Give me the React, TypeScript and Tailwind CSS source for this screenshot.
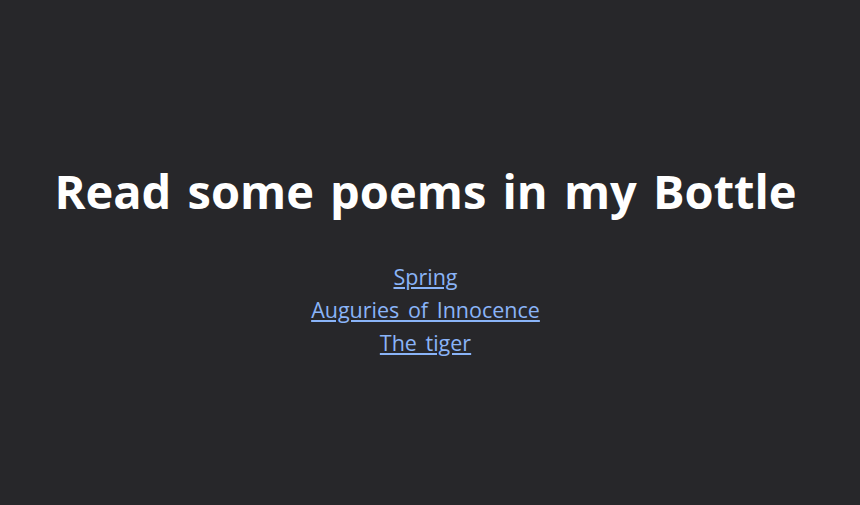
import React from "react";

const poems = ["Spring", "Auguries of Innocence", "The tiger"];

export default function App() {
  return (
    <div className="flex h-screen w-full flex-col items-center justify-center bg-[#27272a] pr-[9px] pt-[16px] font-['Open_Sans',sans-serif] text-white">
      <h1 className="text-[47px] font-bold leading-tight [word-spacing:4px]">
        Read some poems in my Bottle
      </h1>
      <ul className="mt-[40px] flex flex-col items-center">
        {poems.map((p) => (
          <li key={p} className="text-[21.5px] leading-[33px]">
            <a href="#" className="text-[#8ab4f8] underline [word-spacing:3px]">
              {p}
            </a>
          </li>
        ))}
      </ul>
    </div>
  );
}
